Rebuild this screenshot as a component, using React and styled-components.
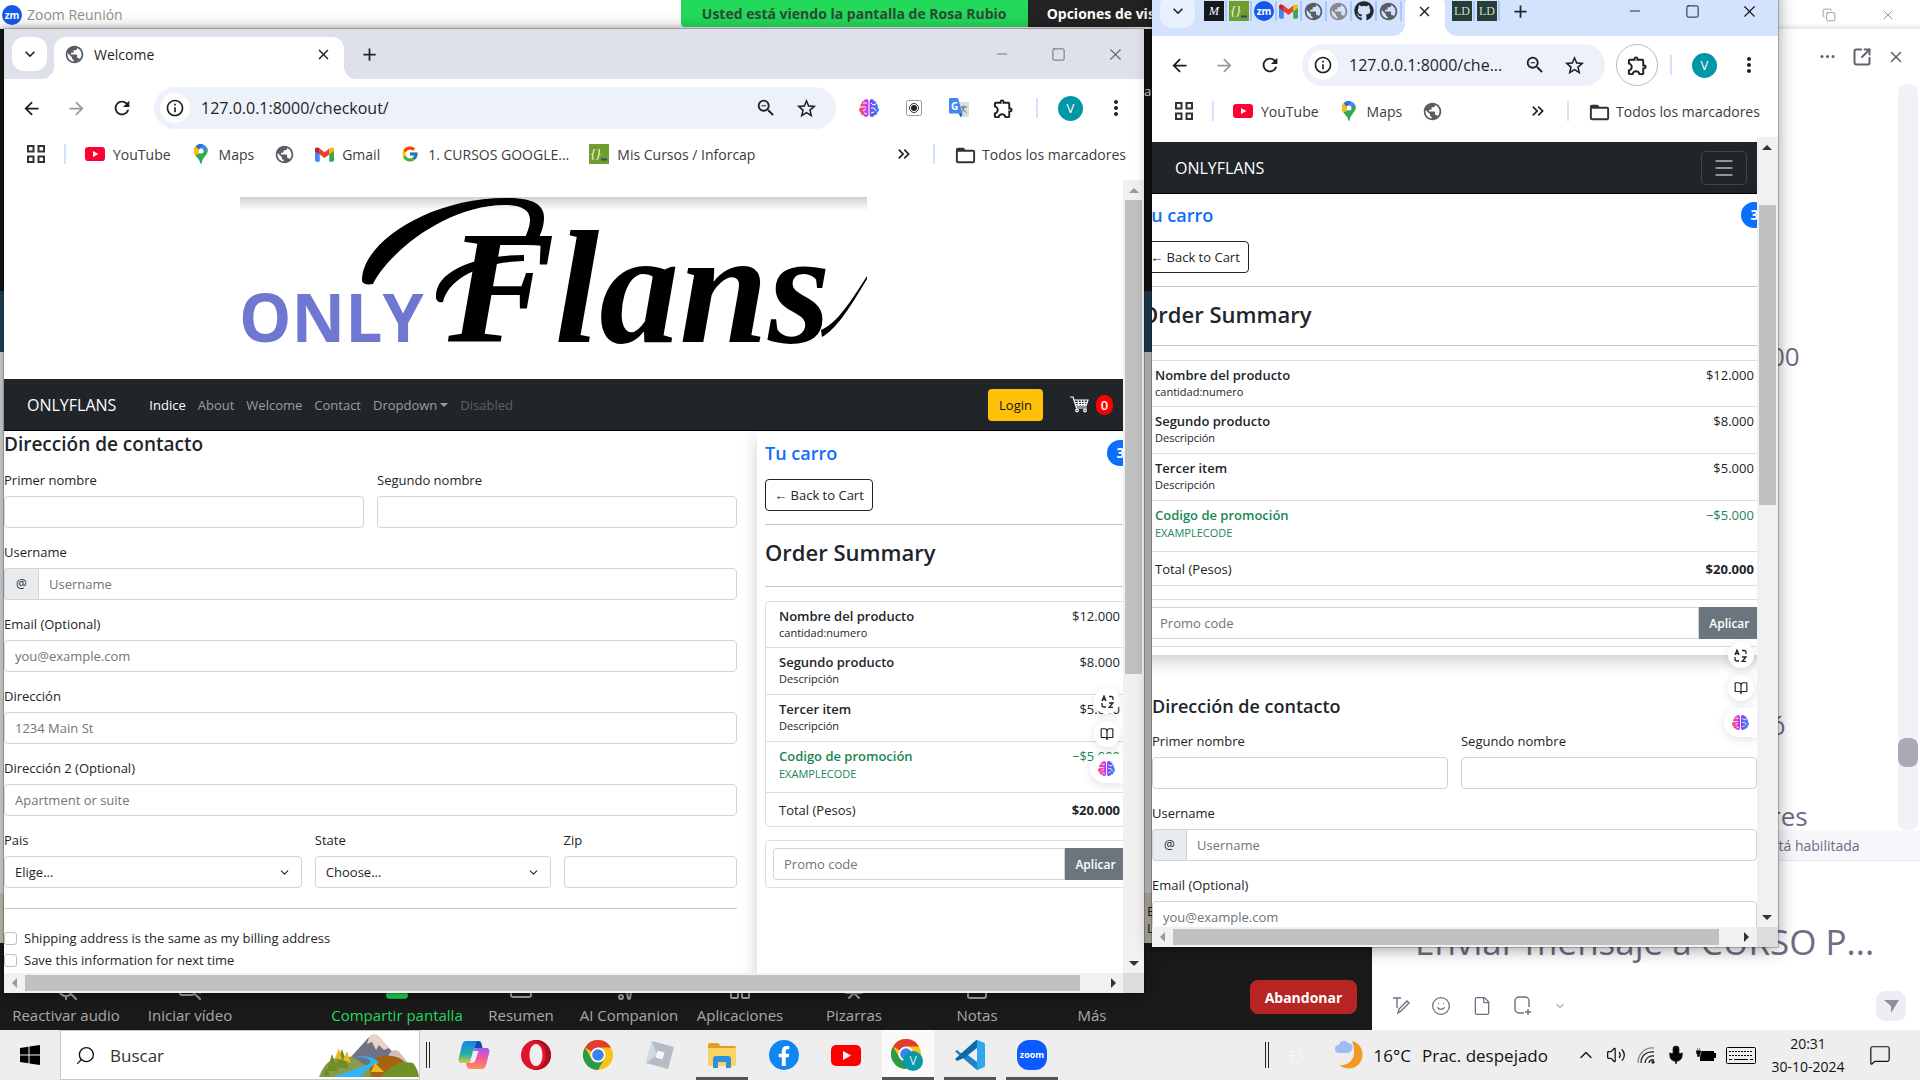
import React, { useId } from "react";
import styled, { createGlobalStyle, css } from "styled-components";
import {
  MdArrowBack, MdArrowForward, MdRefresh, MdInfoOutline, MdZoomOut, MdStarBorder,
  MdOutlineExtension, MdMoreVert, MdExpandMore, MdClose, MdAdd, MdFolderOpen,
  MdKeyboardDoubleArrowRight, MdPublic,
} from "react-icons/md";
import { FaBrain, FaGithub, FaFacebookF } from "react-icons/fa";
import { FcGoogle } from "react-icons/fc";
import {
  Minus, Square, X, Copy, SquareArrowOutUpRight, Smile, File as FileIcon, ChevronDown, ChevronUp,
  BookOpen, MicOff, VideoOff, Search, Volume2, Wifi, Mic, MessageSquare, Menu, Ellipsis,
  AppWindow, Sparkles, LayoutGrid, Presentation, StickyNote,
} from "lucide-react";

const Global = createGlobalStyle`
  *, *::before, *::after { box-sizing: border-box; }
  html, body, #root { height: 100%; }
  body { margin: 0; overflow: hidden; font-family: "Open Sans", "Noto Sans", sans-serif; color: #212529; }
  h1, h2, p, ul { margin: 0; padding: 0; }
  ul { list-style: none; }
  button, input, select { font: inherit; color: inherit; margin: 0; }
  button { padding: 0; border: 0; background: none; cursor: pointer; }
  a { color: inherit; text-decoration: none; }
  svg { display: block; flex-shrink: 0; }
`;

/* ---------- desktop ---------- */
const Desktop = styled.main`
  position: relative;
  display: flex;
  flex-direction: column;
  height: 100vh;
  overflow: hidden;
  background: #fff;
`;
const Gradients = styled.svg`
  position: absolute;
`;
const ZoomTitle = styled.header`
  display: flex;
  align-items: center;
  height: 29px;
  padding-left: 2px;
  gap: 5px;
  font-size: 14px;
  color: #8f8f8f;
  background: linear-gradient(#fff 80%, #e6e6e6);
`;
const ShareNotice = styled.p`
  display: flex;
  align-items: center;
  justify-content: center;
  align-self: flex-start;
  height: 27px;
  width: 347px;
  margin-left: 553px;
  border-radius: 0 0 0 4px;
  background: #23d959;
  color: #2c4a35;
  font-size: 14px;
  font-weight: 700;
  white-space: nowrap;
`;
const ShareOptions = styled.button`
  align-self: flex-start;
  height: 27px;
  margin-left: -5px;
  padding: 0 19px;
  background: #232323;
  color: #fff;
  font-size: 14px;
  font-weight: 700;
  white-space: nowrap;
`;
const TitleActions = styled.div`
  display: flex;
  align-items: center;
  gap: 44px;
  margin-left: auto;
  padding-right: 24px;
  color: #8c8c8c;
`;
const ZoomBody = styled.div`
  display: flex;
  flex: 1;
  min-height: 0;
`;
const Meeting = styled.section`
  display: flex;
  flex-direction: column;
  flex: 1;
  min-width: 0;
`;
const Shared = styled.div`
  position: relative;
  flex: 1;
  background: linear-gradient(#161616 0 262px, #20455c 262px 323px, #dcdcdc 323px 864px, #c9c4b8 864px);
`;
const SharedText = styled.span`
  position: absolute;
  left: ${(p) => p.$x}px;
  top: ${(p) => p.$y}px;
  font-size: 13px;
  line-height: 16px;
  color: ${(p) => p.$color};
`;
const MeetingBar = styled.nav`
  display: flex;
  height: 87px;
  background: #1a1a1a;
  color: #a9a9a9;
`;
const MeetingButton = styled.button`
  display: flex;
  flex-direction: column;
  align-items: center;
  justify-content: flex-end;
  gap: 4px;
  width: ${(p) => p.$w}px;
  margin-left: ${(p) => p.$gap || 0}px;
  padding-bottom: 5px;
  font-size: 15px;
  line-height: 20px;
  white-space: nowrap;
  color: ${(p) => (p.$on ? "#23d959" : "inherit")};
`;
const Leave = styled.button`
  align-self: flex-start;
  width: 107px;
  height: 34px;
  margin: 37px 15px 0 auto;
  border-radius: 8px;
  background: #b72525;
  color: #fff;
  font-size: 14px;
  font-weight: 700;
`;

/* ---------- chat ---------- */
const Chat = styled.aside`
  display: flex;
  flex-direction: column;
  width: 548px;
  background: #fff;
  color: #6e6c84;
`;
const ChatHead = styled.div`
  display: flex;
  align-items: center;
  justify-content: flex-end;
  gap: 15px;
  height: 55px;
  padding-right: 15px;
  color: #62606f;
`;
const ChatLog = styled.div`
  display: flex;
  flex: 1;
  min-height: 0;
`;
const Messages = styled.div`
  display: flex;
  flex-direction: column;
  justify-content: flex-end;
  flex: 1;
  padding-left: 398px;
  font-size: 26px;
  line-height: 28px;
`;
const Message = styled.p`
  margin-bottom: ${(p) => p.$after || 0}px;
`;
const ChatTrack = styled.div`
  display: flex;
  flex-direction: column;
  justify-content: flex-end;
  width: 20px;
  margin-right: 2px;
  padding-bottom: 63px;
  border-radius: 8px;
  background: #f2f1f7;
`;
const ChatThumb = styled.div`
  height: 29px;
  border-radius: 8px;
  background: #a9a8b3;
`;
const ChatNotice = styled.p`
  height: 31px;
  padding-left: 392px;
  border-bottom: 1px solid #e6e5ee;
  background: #f7f6fb;
  font-size: 14px;
  line-height: 31px;
`;
const Composer = styled.div`
  display: flex;
  flex-direction: column;
  height: 169px;
  padding: 56px 14px 9px 43px;
`;
const ComposerInput = styled.input`
  width: 100%;
  height: 48px;
  padding: 0;
  border: 0;
  outline: 0;
  font-size: 35px;
  &::placeholder { color: #6e6c84; opacity: 1; }
`;
const ComposerTools = styled.div`
  display: flex;
  align-items: center;
  gap: 21px;
  margin-top: auto;
  height: 30px;
  margin-left: -23px;
`;
const Send = styled.button`
  display: grid;
  place-items: center;
  width: 30px;
  height: 30px;
  margin-left: auto;
  border-radius: 9px;
  background: #ededf3;
`;

/* ---------- browser window ---------- */
const Window = styled.section`
  position: absolute;
  top: ${(p) => p.$top}px;
  bottom: ${(p) => p.$bottom}px;
  left: ${(p) => p.$left};
  width: ${(p) => p.$width};
  display: flex;
  flex-direction: column;
  background: #fff;
  overflow: hidden;
`;
const WindowShadow = styled(Window)`
  background: none;
  overflow: visible;
  box-shadow: 0 0 0 1px #0003, 0 2px 16px #0006;
`;
const TabStrip = styled.div`
  display: flex;
  align-items: flex-end;
  height: 50px;
  padding-left: 8px;
  background: ${(p) => (p.$active ? "#d3e3fd" : "#dee1e9")};
`;
const TabSearch = styled.button`
  display: grid;
  place-items: center;
  width: 35px;
  height: 34px;
  margin: 0 7px 8px 0;
  border-radius: 12px;
  background: ${(p) => (p.$active ? "#e9f0fd" : "#fff")};
`;
const Tab = styled.div`
  position: relative;
  display: flex;
  align-items: center;
  gap: 9px;
  width: ${(p) => (p.$compact ? 40 : 290)}px;
  height: 42px;
  margin: ${(p) => (p.$compact ? "0 5px 0 3px" : 0)};
  padding: 0 12px 8px 10px;
  border-radius: 12px 12px 0 0;
  background: #fff;
  font-size: 14px;
  color: #1f1f1f;
  &::before, &::after {
    content: "";
    position: absolute;
    bottom: 0;
    width: 12px;
    height: 12px;
  }
  &::before { left: -12px; background: radial-gradient(circle at 0 0, transparent 12px, #fff 12px); }
  &::after { right: -12px; background: radial-gradient(circle at 100% 0, transparent 12px, #fff 12px); }
`;
const TabClose = styled.button`
  margin-left: auto;
  margin-right: ${(p) => (p.$only ? "auto" : 0)};
`;
const MiniTab = styled.button`
  display: grid;
  place-items: center;
  width: 25px;
  height: 20px;
  margin-bottom: 15px;
  border-right: 2px solid #a8c7fa;
`;
const NewTab = styled.button`
  display: grid;
  place-items: center;
  width: 34px;
  height: 34px;
  margin: 0 0 8px ${(p) => p.$gap}px;
`;
const WindowControls = styled.div`
  display: flex;
  align-self: flex-end;
  height: 50px;
  margin-left: auto;
`;
const Control = styled.button`
  display: grid;
  place-items: center;
  width: 57px;
  color: ${(p) => (p.$active ? "#111" : "#666")};
`;
const ToolRow = styled.div`
  display: flex;
  align-items: center;
  height: 58px;
  padding: 0 6px 0 5px;
  color: #1f1f1f;
`;
const Tool = styled.button`
  display: grid;
  place-items: center;
  width: 45px;
  height: 42px;
  flex-shrink: 0;
  color: ${(p) => (p.$dim ? "#9a9a9a" : "inherit")};
`;
const Ring = styled.span`
  display: grid;
  place-items: center;
  width: 42px;
  height: 42px;
  border-radius: 50%;
  border: ${(p) => (p.$on ? "1px solid #bbb" : "0")};
`;
const Pill = styled.div`
  display: flex;
  align-items: center;
  flex: 1;
  min-width: 0;
  height: 42px;
  margin: 0 10px;
  padding: 0 10px 0 6px;
  border-radius: 21px;
  background: #ecf1fa;
`;
const SiteInfo = styled.button`
  display: grid;
  place-items: center;
  width: 30px;
  height: 30px;
  flex-shrink: 0;
  border-radius: 50%;
  background: #fff;
`;
const Address = styled.input`
  flex: 1;
  min-width: 0;
  margin-left: 11px;
  padding: 0;
  border: 0;
  outline: 0;
  background: none;
  font-size: 16px;
`;
const PillTool = styled.button`
  display: grid;
  place-items: center;
  width: 40px;
`;
const Divider = styled.span`
  width: 2px;
  height: 20px;
  margin: 0 ${(p) => (p.$wide ? 19 : 10)}px;
  flex-shrink: 0;
  background: #d3e3fd;
`;
const Avatar = styled.span`
  display: grid;
  place-items: center;
  width: 25px;
  height: 25px;
  border-radius: 50%;
  background: #0097a7;
  color: #fff;
  font-size: 13px;
`;
const BookmarkRow = styled.nav`
  display: flex;
  align-items: center;
  height: 43px;
  padding: 0 18px 9px 23px;
  font-size: 14px;
  color: #3c3c3c;
  white-space: nowrap;
`;
const Bookmark = styled.a`
  display: flex;
  align-items: center;
  gap: 8px;
  margin-right: 20px;
  &:last-child { margin-right: 0; }
`;
const BookmarkIcon = styled.span`
  display: grid;
  place-items: center;
  width: 20px;
  height: 20px;
`;
const Spacer = styled.span`
  flex: 1;
`;
const Viewport = styled.div`
  display: grid;
  grid-template: minmax(0, 1fr) 20px / minmax(0, 1fr) 21px;
  flex: 1;
  min-height: 0;
`;
const Page = styled.div`
  position: relative;
  overflow: hidden;
  background: #fff;
  padding-top: ${(p) => p.$top || 0}px;
`;
const Track = styled.div`
  display: flex;
  flex-direction: ${(p) => (p.$row ? "row" : "column")};
  align-items: center;
  background: #f1f1f1;
`;
const Arrow = styled.span`
  display: grid;
  place-items: center;
  width: 21px;
  height: 20px;
  flex-shrink: 0;
  color: ${(p) => (p.$dim ? "#9a9a9a" : "#333")};
`;
const Rail = styled.div`
  flex: 1;
  align-self: stretch;
  padding: ${(p) => (p.$row ? "2px 0" : "0 2px")};
`;
const Thumb = styled.div`
  background: #c1c1c1;
  ${(p) => p.$row
    ? css`width: ${p.$size}%; height: 100%;`
    : css`height: ${p.$size}%; position: relative; top: ${p.$start || 0}%;`}
`;
const Corner = styled.div`
  background: #dcdcdc;
`;

/* ---------- shop page ---------- */
const Banner = styled.div`
  display: flex;
  justify-content: center;
  padding: 17px 20px 12px 0;
`;
const Navbar = styled.nav`
  display: flex;
  align-items: center;
  height: 52px;
  padding: 0 10px 0 23px;
  background: #212529;
  border-bottom: 1px solid #000;
  font-size: 13px;
  color: #9b9d9e;
`;
const Brand = styled.a`
  margin-right: 33px;
  font-size: 16px;
  color: #fff;
`;
const NavLinks = styled.ul`
  display: flex;
  gap: 12px;
`;
const NavLink = styled.a`
  display: flex;
  align-items: center;
  gap: 3px;
  color: ${(p) => (p.$on ? "#fff" : p.$off ? "#5d6063" : "inherit")};
`;
const Caret = styled.span`
  border: 4px solid transparent;
  border-top-color: currentColor;
  border-bottom: 0;
`;
const Login = styled.button`
  width: 55px;
  height: 32px;
  margin-left: auto;
  border-radius: 4px;
  background: #ffc107;
  color: #111;
`;
const Cart = styled.a`
  display: flex;
  align-items: center;
  gap: 7px;
  margin-left: 27px;
`;
const CartCount = styled.span`
  width: 17px;
  height: 20px;
  border-radius: 9px;
  background: #f00;
  color: #fff;
  font-size: 13px;
  font-weight: 600;
  line-height: 20px;
  text-align: center;
`;
const Toggler = styled.button`
  display: grid;
  place-items: center;
  width: 46px;
  height: 34px;
  margin-left: auto;
  border: 1px solid #414549;
  border-radius: 4px;
`;
const Checkout = styled.div`
  display: ${(p) => (p.$stacked ? "block" : "grid")};
  grid-template-columns: minmax(0, 1fr) 366px;
  gap: 20px;
  min-height: 560px;
`;
const Summary = styled.aside`
  margin: ${(p) => (p.$stacked ? "0 -19px 40px" : "1px -19px 0 0")};
  padding: 8px;
  background: #fff;
  box-shadow: 0 6px 16px #0003;
`;
const SummaryHead = styled.h2`
  display: flex;
  align-items: center;
  justify-content: space-between;
  height: 26px;
  margin-bottom: 13px;
  font-size: 18px;
  font-weight: 600;
  color: #0d6efd;
`;
const Count = styled.span`
  width: 27px;
  height: 26px;
  border-radius: 13px;
  background: #0d6efd;
  color: #fff;
  font-size: 14px;
  font-weight: 700;
  line-height: 26px;
  text-align: center;
`;
const BackLink = styled.a`
  display: flex;
  align-items: center;
  justify-content: center;
  width: 108px;
  height: 32px;
  border: 1px solid #212529;
  border-radius: 4px;
  font-size: 13px;
`;
const Rule = styled.hr`
  height: 1px;
  margin: ${(p) => p.$m};
  border: 0;
  background: #c4c5c6;
`;
const SummaryTitle = styled.h1`
  height: ${(p) => (p.$stacked ? 58 : 61)}px;
  font-size: 22px;
  font-weight: 600;
  line-height: 54px;
`;
const Items = styled.ul`
  border: 1px solid #dcddde;
  border-radius: 4px;
  font-size: 13px;
`;
const Item = styled.li`
  display: flex;
  justify-content: space-between;
  align-items: ${(p) => (p.$center ? "center" : "flex-start")};
  height: ${(p) => p.$h}px;
  padding: ${(p) => (p.$center ? "0 13px" : "5px 13px 0")};
  border-bottom: 1px solid #dcddde;
  line-height: 18px;
  color: ${(p) => (p.$green ? "#198754" : "inherit")};
  &:last-child { border-bottom: 0; }
`;
const ItemName = styled.p`
  font-size: 13px;
  font-weight: 600;
`;
const ItemNote = styled.p`
  font-size: 11px;
  line-height: ${(p) => (p.$tall ? 18 : 15)}px;
`;
const Promo = styled.form`
  display: flex;
  margin-top: 13px;
  padding: 7px;
  border: 1px solid #dcddde;
  border-radius: 4px;
`;
const Field = styled.input`
  width: 100%;
  min-width: 0;
  height: 32px;
  padding: 0 10px;
  border: 1px solid #ced4da;
  border-radius: ${(p) => p.$radius || "4px"};
  background: #fff;
  font-size: 13px;
  outline: 0;
  &::placeholder { color: #6c757d; opacity: 1; }
`;
const Apply = styled.button`
  width: 61px;
  flex-shrink: 0;
  background: #6c757d;
  color: #fff;
  font-size: 12px;
  font-weight: 600;
`;
const Form = styled.form`
  font-size: 13px;
`;
const FormTitle = styled.h2`
  height: ${(p) => (p.$small ? 26 : 29)}px;
  margin-bottom: 12px;
  font-size: ${(p) => (p.$small ? 18 : 19)}px;
  font-weight: 600;
  line-height: ${(p) => (p.$small ? 22 : 27)}px;
`;
const Fields = styled.div`
  display: grid;
  grid-template-columns: repeat(12, minmax(0, 1fr));
  column-gap: 13px;
`;
const Group = styled.div`
  grid-column: span ${(p) => p.$span};
  height: 72px;
`;
const Label = styled.label`
  display: block;
  height: 24px;
  line-height: 16px;
`;
const Joined = styled.div`
  position: relative;
  display: flex;
`;
const At = styled.span`
  width: 34px;
  flex-shrink: 0;
  height: 32px;
  border: 1px solid #ced4da;
  border-right: 0;
  border-radius: 4px 0 0 4px;
  background: #e9ecef;
  font-size: 12px;
  line-height: 30px;
  text-align: center;
`;
const SelectBox = styled.select`
  width: 100%;
  height: 32px;
  padding: 0 10px;
  border: 1px solid #ced4da;
  border-radius: 4px;
  background: #fff;
  appearance: none;
`;
const SelectArrow = styled(ChevronDown)`
  position: absolute;
  right: 11px;
  top: 10px;
  pointer-events: none;
`;
const Check = styled.label`
  display: flex;
  align-items: center;
  gap: 7px;
  height: 22px;
`;
const Box = styled.input`
  width: 13px;
  height: 13px;
  border: 1px solid #bfbfbf;
  border-radius: 3px;
  appearance: none;
`;
const Helpers = styled.div`
  position: absolute;
  right: 0;
  bottom: 190px;
  display: flex;
  flex-direction: column;
  align-items: flex-end;
  gap: 7px;
`;
const Helper = styled.button`
  display: grid;
  place-items: center;
  width: ${(p) => (p.$wide ? 33 : 26)}px;
  height: ${(p) => (p.$wide ? 29 : 26)}px;
  margin-right: ${(p) => (p.$wide ? 0 : 3)}px;
  border-radius: ${(p) => (p.$wide ? "15px 0 0 15px" : "13px")};
  background: #fff;
  box-shadow: 0 2px 10px #0000001f;
`;

/* ---------- taskbar ---------- */
const Taskbar = styled.footer`
  display: flex;
  align-items: center;
  height: 50px;
  background: #eee;
  color: #111;
`;
const Start = styled.button`
  display: grid;
  place-items: center;
  width: 60px;
  height: 50px;
`;
const SearchBox = styled.label`
  display: flex;
  align-items: center;
  gap: 14px;
  width: 360px;
  height: 50px;
  padding-left: 14px;
  border: 1px solid #c8c8c8;
  background: #fff;
`;
const SearchGlyph = styled(Search)`
  transform: scaleX(-1);
`;
const SearchInput = styled.input`
  flex: 1;
  min-width: 0;
  padding: 0;
  border: 0;
  outline: 0;
  background: none;
  font-size: 17px;
  &::placeholder { color: #333; opacity: 1; }
`;
const Grip = styled.span`
  width: 4px;
  height: 26px;
  margin: 0 ${(p) => p.$after}px 0 6px;
  border: solid #222;
  border-width: 0 1px;
`;
const AppButton = styled.button`
  position: relative;
  display: grid;
  place-items: center;
  width: 62px;
  height: 50px;
  border: solid transparent;
  border-width: 0 5px;
  background: ${(p) => (p.$active ? "#fafafa" : "none")} padding-box;
  &::after {
    content: "";
    position: absolute;
    inset: auto 0 0;
    height: ${(p) => (p.$open ? 3 : 0)}px;
    background: #555;
  }
`;
const Weather = styled.button`
  display: flex;
  align-items: center;
  gap: 11px;
  margin-right: 23px;
  font-size: 17px;
  white-space: nowrap;
`;
const Lang = styled.span`
  width: 20px;
  margin-right: 26px;
  color: #f8f8f8;
  font-size: 14px;
`;
const TrayIcon = styled.button`
  display: grid;
  place-items: center;
  width: ${(p) => p.$w || 30}px;
  height: 50px;
`;
const Clock = styled.time`
  width: 94px;
  font-size: 14px;
  line-height: 23px;
  text-align: center;
`;
const Notify = styled.button`
  display: grid;
  place-items: center;
  width: 50px;
  height: 50px;
  margin-right: 15px;
`;

/* ---------- drawings ---------- */
const ZoomBadge = ({ size = 20 }) => (
  <svg width={size} height={size} viewBox="0 0 20 20"><circle cx="10" cy="10" r="10" fill="#1458ea" />
    <text x="10" y="13.5" textAnchor="middle" fontSize="10" fontWeight="700" fill="#fff">zm</text></svg>
);
const YouTube = ({ w = 20, color = "#ff0033" }) => (
  <svg width={w} height={w * 0.7} viewBox="0 0 30 21"><rect width="30" height="21" rx="5" fill={color} /><path d="M12 6l8 4.5-8 4.5z" fill="#fff" /></svg>
);
const MapsPin = () => (
  <svg width="14" height="20" viewBox="0 0 14 20">
    <path d="M0 7a7 7 0 0 0 1.5 4.6L9.5 2 7 0A7 7 0 0 0 0 7z" fill="#ea4335" />
    <path d="M1.6 2.6A7 7 0 0 1 9.3.4L4.8 5.6z" fill="#1a73e8" />
    <path d="M9.3.4A7 7 0 0 1 13.4 4.2L9 9.2 4.8 5.6z" fill="#4285f4" />
    <path d="M1.5 11.6A7 7 0 0 1 1.6 2.6l3.2 3A3 3 0 0 0 5 9z" fill="#fbbc04" />
    <path d="M13.4 4.2C15.6 10.500 8.500 12 7.700 19.300Q7 20.600 6.300 19.300C5.800 15.800 3 14 1.500 11.600z" fill="#34a853" />
    <circle cx="7" cy="7" r="2.500" fill="#fff" />
  </svg>
);
const Gmail = () => (
  <svg width="19" height="15" viewBox="0 0 24 18">
    <path d="M0 2v14a2 2 0 0 0 2 2h4V7z" fill="#4285f4" /><path d="M24 2v14a2 2 0 0 1-2 2h-4V7z" fill="#34a853" />
    <path d="M18 1v8l6-4.500V2.500C24 0 21 -.5 19.500.7z" fill="#fbbc04" /><path d="M6 1v8L0 4.500V2.500C0 0 3-.5 4.500.7z" fill="#c5221f" />
    <path d="M6 1.500l6 4.700 6-4.700V9l-6 4.500L6 9z" fill="#ea4335" />
  </svg>
);
const Tile = ({ bg, fg = "#fff", upright, children }) => (
  <svg width="20" height="20" viewBox="0 0 20 20"><rect width="20" height="20" fill={bg} />
    <text x="10" y="14" textAnchor="middle" fontSize="12" fontFamily="Liberation Serif, serif" fontStyle={upright ? "normal" : "italic"} fill={fg}>{children}</text></svg>
);
const Inforcap = () => (
  <svg width="20" height="20" viewBox="0 0 20 20"><rect width="20" height="20" fill="#6f9e2c" />
    <text x="2" y="14" fontSize="12" fontFamily="Liberation Serif, serif" fontStyle="italic" fill="#fff">{"{}"}</text><path d="M12 15.500h6" stroke="#1f4f7a" strokeWidth="2" /></svg>
);
const Globe = () => <MdPublic size={21} color="#5a5e64" />;
const AppsGrid = () => (
  <svg width="18" height="18" viewBox="0 0 18 18" fill="none" stroke="#333" strokeWidth="2"><path d="M1 1h5.500v5.500H1zM11.500 1H17v5.500h-5.500zM1 11.500h5.500V17H1zM11.500 11.500H17V17h-5.500z" /></svg>
);
const Brain = ({ size = 20 }) => (
  <svg width={size} height={size} viewBox="0 0 20 20">
    <FaBrain size={20} fill="url(#brain)" />
    <path d="M1 9h6M4 5h4M4 13l3-2M8 16l-3-1M12 5l2 2 3-1M12 10h3l2 3M12 15l3-1" stroke="#fff" strokeWidth="1" fill="none" />
  </svg>
);
const Recorder = () => (
  <svg width="16" height="16" viewBox="0 0 16 16"><rect x=".5" y=".5" width="15" height="15" rx="2" fill="#fff" stroke="#999" /><circle cx="8" cy="8" r="4.500" fill="none" stroke="#333" /><circle cx="8" cy="8" r="3" fill="#222" /></svg>
);
const Translate = () => (
  <svg width="20" height="20" viewBox="0 0 20 20"><path d="M8 4h11a1 1 0 0 1 1 1v13a1 1 0 0 1-1 1h-6z" fill="#dcdcdc" /><path d="M1 0h8l4.500 15.500H1a1 1 0 0 1-1-1V1a1 1 0 0 1 1-1z" fill="#4285f4" /><path d="M9.500 15.500h4L12 19.500z" fill="#1a4fb5" />
    <text x="2" y="12" fontSize="10" fontWeight="700" fill="#fff">G</text><path d="M12 9h6M15 7.500V9c0 3-1.500 4.500-3 5.500M13 9c.5 2.500 2 4 4.500 5.500" stroke="#5f7180" fill="none" /></svg>
);
const CartIcon = () => (
  <svg width="19" height="17" viewBox="0 0 19 17" fill="none" stroke="#fff" strokeWidth="1.200"><path d="M0 1h3l3.500 11H17M4 4h14l-2 6H6M8 4l1 6M11 4l1 6M14 4l.5 6M5 6.500h12M6 8.500h11" /><circle cx="7" cy="14.500" r="1.300" /><circle cx="15" cy="14.500" r="1.300" /></svg>
);
const TranslateMini = () => (
  <svg width="13" height="13" viewBox="0 0 13 13" fill="none" stroke="#222" strokeWidth="1.300"><path d="M1 6l2-5 2 5M2 4.500h2M8 1.500h2a2 2 0 0 1 2 2V5M1 8v2a2 2 0 0 0 2 2h2M8 8h4l-4 4.500h4" /></svg>
);
const Logo = () => (
  <svg width="627" height="170" viewBox="0 0 627 170" role="img" aria-label="OnlyFlans">
    <defs><linearGradient id="haze" x1="0" y1="0" x2="0" y2="1"><stop stopColor="#d2d2d2" /><stop offset="1" stopColor="#fff" /></linearGradient></defs>
    <rect width="627" height="14" fill="url(#haze)" />
    <text x="-1" y="145" fontFamily="Open Sans, sans-serif" fontWeight="700" fontSize="66" fill="#7077d0">ONLY</text>
    <text x="208" y="145" fontFamily="Liberation Serif, serif" fontStyle="italic" fontWeight="700" fontSize="160">Flans</text>
    <path d="M122 84C121 46 190 0 268 1c24 0 36 6 36 20 0 8-3 16-8 26h-14c5-10 8-18 8-24 0-10-8-14-22-15C208 6 148 56 133 87c-6 1-10 0-11-3z" />
    <path d="M196 100c-1-26 40-42 88-42v6c-44 1-76 18-81 41-4 1-7-1-7-5z" />
    <path d="M582 140c14-8 26-26 45-58v-3c-20 32-32 48-46 54z" />
  </svg>
);
const Chrome = ({ badge }) => (
  <svg width={badge ? 34 : 30} height={badge ? 32 : 30} viewBox={badge ? "0 0 34 32" : "0 0 30 30"}>
    <circle cx="15" cy="15" r="15" fill="#fbc116" />
    <path d="M15 15L2 7.500A15 15 0 0 1 28 7.500H15z" fill="#e33b2e" />
    <path d="M2 7.500A15 15 0 0 0 15 30l6.500-11.300L8.500 18.700z" fill="#2c9a48" />
    <circle cx="15" cy="15" r="7.500" fill="#fff" /><circle cx="15" cy="15" r="5.800" fill="#3c82f0" />
    {badge && <><circle cx="22" cy="22" r="10" fill="#0b97a7" /><text x="22" y="26" fontSize="12" textAnchor="middle" fill="#d9f1f4">V</text></>}
  </svg>
);
const Copilot = () => (
  <svg width="32" height="30" viewBox="0 0 32 30">
    <defs>
      <linearGradient id="cpA" x1="0" y1="0" x2="0" y2="1"><stop stopColor="#1583e8" /><stop offset=".6" stopColor="#21b0a5" /><stop offset="1" stopColor="#d9c93a" /></linearGradient>
      <linearGradient id="cpB" x1="0" y1="0" x2="0" y2="1"><stop stopColor="#a259f2" /><stop offset=".5" stopColor="#f2589a" /><stop offset="1" stopColor="#fb9352" /></linearGradient>
    </defs>
    <path d="M8 1h12c2 0 3 1 3.500 3l1 4h-6c-2 0-3 1-3.500 3l-2.500 9c-.6 2-2 3-4 3H4c-3 0-4-2-3.200-5L4 5c.7-2.500 2-4 4-4z" fill="url(#cpA)" />
    <path d="M19 1h1c2 0 3 1 3.500 3l1 4h-6c-1.500 0-2 .5-2.600 1.200z" fill="#1647b0" />
    <path d="M24 8h4c3 0 4 2 3.200 5L28 25c-.7 2.500-2 4-4 4H12c-2 0-3-1-3.400-3L8 23h1c2 0 3-1 3.500-3l3-9c.6-2 2-3 4-3z" fill="url(#cpB)" />
    <path d="M15.500 11h5l-3 9c-.5 2-2 3-4 3h-2c.6-.6.800-1.500 1-3z" fill="#eee" />
  </svg>
);
const Opera = () => (
  <svg width="30" height="30" viewBox="0 0 30 30"><path fillRule="evenodd" d="M15 0a15 15 0 1 0 0 30 15 15 0 0 0 0-30zm0 4c4 0 6.500 5 6.500 11S19 26 15 26 8.500 21 8.500 15 11 4 15 4z" fill="#e0142a" /><path d="M15 0a15 15 0 0 1 0 30c-2 0-3.500-1-5-2 8 3 15-4 15-13S18-1 10 2q2-2 5-2z" fill="#a90f1f" /></svg>
);
const Roblox = () => (
  <svg width="30" height="30" viewBox="0 0 30 30"><path d="M7 1l22 6-6 22L1 23z" fill="#b4bdc6" /><path d="M7 1L1 23l11-8z" fill="#d3d9de" /><path d="M12.500 10.500l7 2-2 7-7-2z" fill="#f4f6f8" /></svg>
);
const Explorer = () => (
  <svg width="28" height="25" viewBox="0 0 28 25"><path d="M0 2q0-2 2-2h8l3 3h13q2 0 2 2v4H0z" fill="#e0a020" /><rect y="5" width="28" height="18" rx="1" fill="#fbd265" /><path d="M5 25v-9q0-3 3-3h12q3 0 3 3v9h-5v-6h-8v6z" fill="#3191dd" /></svg>
);
const VsCode = () => (
  <svg width="30" height="30" viewBox="0 0 30 30"><path d="M22 0L7 14l-5-4-2 1.500L22 30l7-3V3z" fill="#1d82c8" /><path d="M22 8L10 17.500 2 21 0 19 20 1l2-1z" fill="#0d69ac" /><path d="M22 0l8 3.500v23L22 30z" fill="#2fa7ee" /><path d="M22 8v14l-9-7z" fill="#eee" /></svg>
);
const ZoomApp = () => (
  <svg width="30" height="30" viewBox="0 0 30 30"><rect width="30" height="30" rx="12" fill="#0b5cff" /><text x="15" y="18" fontSize="9" fontWeight="700" textAnchor="middle" fill="#fff">zoom</text></svg>
);
const FacebookApp = () => (
  <svg width="30" height="30" viewBox="0 0 30 30"><circle cx="15" cy="15" r="15" fill="#0f86f2" /><FaFacebookF x="5" y="6" size={20} color="#fff" /></svg>
);
const WindowsLogo = () => (
  <svg width="20" height="20" viewBox="0 0 20 20"><path d="M0 3l8.500-1.200v7.700H0zM9.500 1.600L20 0v9.500H9.500zM0 10.500h8.500v7.700L0 17zM9.500 10.500H20V20L9.500 18.400z" fill="#000" /></svg>
);
const Mountain = () => (
  <svg width="100" height="43" viewBox="0 0 100 43">
    <path d="M31 24L50 3q5-5 10 0l18 20 8 8H28z" fill="#6d7286" />
    <path d="M50 3q5-5 10 0l10 11-5 2-5-5-3 5-4-8-5 2z" fill="#ecd2c8" />
    <path d="M70 20q6-8 12 0l8 10H68z" fill="#d6bdb7" />
    <path d="M0 43q8-24 34-20l30 20z" fill="#8a9a4a" />
    <path d="M50 27q25-12 38 3 10 8 12 13H52z" fill="#a5650f" />
    <path d="M62 43q14-18 32-14 5 6 6 14z" fill="#6f9124" />
    <path d="M34 22q22 2 16 8-22 8-36 13h28q6-10 18-14-4-8-26-7z" fill="#2fb6f5" />
    <path d="M8 37l5-17 6 17zM16 33l7-18 7 20zM4 42l3-9 4 9z" fill="#6d8f25" />
    <path d="M16 24l4-10 3 12zM24 26l4-9 4 12zM52 38l4-9 9 9z" fill="#f3b61f" />
  </svg>
);
const Moon = () => (
  <svg width="28" height="34" viewBox="0 0 28 34"><path d="M17 3c9 2 13 12 9 20-4 8-14 10-22 4 8 1 14-4 15-11 .5-5-.5-9-2-13z" fill="#f39a24" /><path d="M4 15a4 4 0 0 1 0-8 5 5 0 0 1 9-2 4.500 4.500 0 0 1 3 8q-1 2-3 2z" fill="#9fbdf0" /></svg>
);
const WifiArcs = () => (
  <svg width="18" height="20" viewBox="0 0 18 20" fill="none" stroke="#222" strokeWidth="1.300">
    <path d="M1 18C1 9 8 2 17 3" opacity=".5" /><path d="M4 18C4 11 9 6 17 7M8 18c0-4 4-8 9-7M12 18c0-2 2-4 5-3" /><circle cx="16" cy="17" r="1" fill="#222" />
  </svg>
);

const ArrowMark = ({ d, dim }) => (
  <Arrow $dim={dim}><svg width="10" height="10" viewBox="0 0 10 10" fill="currentColor">
    <path d={{ up: "M0 8h10L5 3z", down: "M0 3h10L5 8z", left: "M7 0v10L2 5z", right: "M3 0v10l5-5z" }[d]} />
  </svg></Arrow>
);

/* ---------- shop sections ---------- */
const products = [
  { name: "Nombre del producto", note: "cantidad:numero", price: "$12.000", h: 46 },
  { name: "Segundo producto", note: "Descripción", price: "$8.000", h: 47 },
  { name: "Tercer item", note: "Descripción", price: "$5.000", h: 47 },
];

function OrderSummary({ stacked }) {
  return (
    <Summary $stacked={stacked}>
      <SummaryHead>Tu carro <Count>3</Count></SummaryHead>
      <BackLink href="#cart">← Back to Cart</BackLink>
      <Rule $m="13px 0 0" />
      <SummaryTitle $stacked={stacked}>Order Summary</SummaryTitle>
      <Rule $m="0 0 14px" />
      <Items>
        {products.map((p) => (
          <Item key={p.name} $h={p.h}>
            <div><ItemName>{p.name}</ItemName><ItemNote>{p.note}</ItemNote></div>{p.price}
          </Item>
        ))}
        <Item $h={51} $green>
          <div><ItemName>Codigo de promoción</ItemName><ItemNote $tall>EXAMPLECODE</ItemNote></div>−$5.000
        </Item>
        <Item $h={33} $center><span>Total (Pesos)</span><strong>$20.000</strong></Item>
      </Items>
      <Promo onSubmit={(e) => e.preventDefault()}>
        <Field aria-label="Promo code" placeholder="Promo code" $radius="4px 0 0 4px" />
        <Apply type="submit">Aplicar</Apply>
      </Promo>
    </Summary>
  );
}

function TextGroup({ label, placeholder, span = 12, at }) {
  const id = useId();
  return (
    <Group $span={span}>
      <Label htmlFor={id}>{label}</Label>
      <Joined>
        {at && <At>@</At>}
        <Field id={id} placeholder={placeholder} $radius={at ? "0 4px 4px 0" : undefined} />
      </Joined>
    </Group>
  );
}
function SelectGroup({ label, option, span }) {
  const id = useId();
  return (
    <Group $span={span}>
      <Label htmlFor={id}>{label}</Label>
      <Joined>
        <SelectBox id={id}><option>{option}</option></SelectBox>
        <SelectArrow size={13} />
      </Joined>
    </Group>
  );
}
function ContactForm({ small }) {
  return (
    <Form onSubmit={(e) => e.preventDefault()}>
      <FormTitle $small={small}>Dirección de contacto</FormTitle>
      <Fields>
        <TextGroup span={6} label="Primer nombre" />
        <TextGroup span={6} label="Segundo nombre" />
        <TextGroup label="Username" placeholder="Username" at />
        <TextGroup label="Email (Optional)" placeholder="you@example.com" />
        <TextGroup label="Dirección" placeholder="1234 Main St" />
        <TextGroup label="Dirección 2 (Optional)" placeholder="Apartment or suite" />
        <SelectGroup span={5} label="Pais" option="Elige..." />
        <SelectGroup span={4} label="State" option="Choose..." />
        <TextGroup span={3} label="Zip" />
      </Fields>
      <Rule $m="4px 0 18px" />
      <Check><Box type="checkbox" />Shipping address is the same as my billing address</Check>
      <Check><Box type="checkbox" />Save this information for next time</Check>
    </Form>
  );
}
const PageHelpers = () => (
  <Helpers>
    <Helper aria-label="Traducir"><TranslateMini /></Helper>
    <Helper aria-label="Leer"><BookOpen size={14} color="#222" /></Helper>
    <Helper $wide aria-label="Asistente"><Brain size={17} /></Helper>
  </Helpers>
);

/* ---------- browser ---------- */
function Browser({ active, frame, tabs, url, extensions, bookmarks, pageTop, vThumb, hThumb, upDim, children }) {
  return (
    <>
      <WindowShadow {...frame} as="div" />
      <Window {...frame}>
        <TabStrip $active={active}>
          <TabSearch $active={active} aria-label="Buscar pestañas"><MdExpandMore size={20} /></TabSearch>
          {tabs}
          <WindowControls>
            <Control $active={active} aria-label="Minimizar"><Minus size={16} strokeWidth={1.3} /></Control>
            <Control $active={active} aria-label="Maximizar"><Square size={15} strokeWidth={1.5} /></Control>
            <Control $active={active} aria-label="Cerrar"><X size={19} strokeWidth={1.4} /></Control>
          </WindowControls>
        </TabStrip>
        <ToolRow>
          <Tool aria-label="Atrás"><MdArrowBack size={21} /></Tool>
          <Tool $dim aria-label="Adelante"><MdArrowForward size={21} /></Tool>
          <Tool aria-label="Recargar"><MdRefresh size={22} /></Tool>
          <Pill>
            <SiteInfo aria-label="Información"><MdInfoOutline size={20} /></SiteInfo>
            <Address aria-label="Dirección web" defaultValue={url} />
            <PillTool aria-label="Zoom"><MdZoomOut size={22} /></PillTool>
            <PillTool aria-label="Favorito"><MdStarBorder size={23} /></PillTool>
          </Pill>
          {extensions}
          <Tool aria-label="Extensiones"><Ring $on={active}><MdOutlineExtension size={23} /></Ring></Tool>
          <Divider />
          <Tool aria-label="Perfil"><Avatar>V</Avatar></Tool>
          <Tool aria-label="Menú"><MdMoreVert size={24} /></Tool>
        </ToolRow>
        <BookmarkRow>
          <AppsGrid />
          <Divider $wide />
          {bookmarks}
          <Spacer />
          <MdKeyboardDoubleArrowRight size={20} color="#222" />
          <Divider $wide />
          <Bookmark href="#all"><BookmarkIcon><MdFolderOpen size={23} color="#333" /></BookmarkIcon>Todos los marcadores</Bookmark>
        </BookmarkRow>
        <Viewport>
          <Page $top={pageTop}>{children}<PageHelpers /></Page>
          <Track>
            <ArrowMark d="up" dim={upDim} /><Rail><Thumb $size={vThumb[1]} $start={vThumb[0]} /></Rail><ArrowMark d="down" />
          </Track>
          <Track $row>
            <ArrowMark d="left" dim /><Rail $row><Thumb $row $size={hThumb} /></Rail><ArrowMark d="right" />
          </Track>
          <Corner />
        </Viewport>
      </Window>
    </>
  );
}
const Mark = ({ icon, children }) => (
  <Bookmark href="#site"><BookmarkIcon>{icon}</BookmarkIcon>{children}</Bookmark>
);

export default function App() {
  return (
    <>
      <Global />
      <Gradients width="0" height="0">
        <defs><linearGradient id="brain"><stop stopColor="#ff5a3c" /><stop offset=".3" stopColor="#e03be0" /><stop offset=".6" stopColor="#7a4bf5" /><stop offset="1" stopColor="#2f8bff" /></linearGradient></defs>
      </Gradients>
      <Desktop>
        <ZoomTitle>
          <ZoomBadge /> Zoom Reunión
          <ShareNotice>Usted está viendo la pantalla de Rosa Rubio</ShareNotice>
          <ShareOptions>Opciones de vista</ShareOptions>
          <TitleActions><Copy size={14} strokeWidth={1.4} /><X size={16} strokeWidth={1.4} /></TitleActions>
        </ZoomTitle>
        <ZoomBody>
          <Meeting>
            <Shared>
              <SharedText $x={1144} $y={54} $color="#fff">a</SharedText>
              <SharedText $x={1147} $y={874} $color="#222">E</SharedText>
              <SharedText $x={1147} $y={891} $color="#222">L</SharedText>
            </Shared>
            <MeetingBar>
              <MeetingButton $w={132}><MicOff size={24} />Reactivar audio</MeetingButton>
              <MeetingButton $w={116}><VideoOff size={24} />Iniciar vídeo</MeetingButton>
              <MeetingButton $w={142} $gap={78} $on><Square size={26} fill="#23d959" />Compartir pantalla</MeetingButton>
              <MeetingButton $w={106}><AppWindow size={24} />Resumen</MeetingButton>
              <MeetingButton $w={110}><Sparkles size={24} />AI Companion</MeetingButton>
              <MeetingButton $w={112}><LayoutGrid size={24} />Aplicaciones</MeetingButton>
              <MeetingButton $w={116}><Presentation size={24} />Pizarras</MeetingButton>
              <MeetingButton $w={130}><StickyNote size={24} />Notas</MeetingButton>
              <MeetingButton $w={100}>Más</MeetingButton>
              <Leave>Abandonar</Leave>
            </MeetingBar>
          </Meeting>
          <Chat>
            <ChatHead><Ellipsis size={19} /><SquareArrowOutUpRight size={20} strokeWidth={2.4} /><X size={18} /></ChatHead>
            <ChatLog>
              <Messages><Message $after={341}>00</Message><Message $after={63}>ó</Message><Message>res</Message></Messages>
              <ChatTrack><ChatThumb /></ChatTrack>
            </ChatLog>
            <ChatNotice>está habilitada</ChatNotice>
            <Composer>
              <ComposerInput aria-label="Mensaje" placeholder="Enviar mensaje a CURSO P..." />
              <ComposerTools>
                <svg width="18" height="20" viewBox="0 0 18 20" fill="none" stroke="currentColor" strokeWidth="1.400"><path d="M1 2h8M5 2v10M6 17l1-4 8-8 2 2-8 8z" /></svg>
                <Smile size={20} strokeWidth={1.5} /><FileIcon size={20} strokeWidth={1.5} />
                <svg width="20" height="20" viewBox="0 0 20 20" fill="none" stroke="currentColor" strokeWidth="1.400"><path d="M11 17H6a4 4 0 0 1-4-4V5a4 4 0 0 1 4-4h6a4 4 0 0 1 4 4v6M15 13v6M12 16h6" /></svg>
                <ChevronDown size={12} />
                <Send aria-label="Enviar"><svg width="15" height="15" viewBox="0 0 15 15" fill="#8f8e9c"><path d="M0 1h15L7 14V7z" /></svg></Send>
              </ComposerTools>
            </Composer>
          </Chat>
        </ZoomBody>

        <Browser
          frame={{ $top: 29, $bottom: 87, $left: "4px", $width: "59.375%" }}
          tabs={<>
            <Tab><Globe />Welcome<TabClose aria-label="Cerrar pestaña"><MdClose size={17} /></TabClose></Tab>
            <NewTab $gap={8} aria-label="Nueva pestaña"><MdAdd size={21} /></NewTab>
          </>}
          url="127.0.0.1:8000/checkout/"
          extensions={<>
            <Tool aria-label="Asistente"><Brain /></Tool>
            <Tool aria-label="Grabadora"><Recorder /></Tool>
            <Tool aria-label="Traductor"><Translate /></Tool>
          </>}
          bookmarks={<>
            <Mark icon={<YouTube />}>YouTube</Mark>
            <Mark icon={<MapsPin />}>Maps</Mark>
            <Bookmark href="#local" aria-label="Local"><BookmarkIcon><Globe /></BookmarkIcon></Bookmark>
            <Mark icon={<Gmail />}>Gmail</Mark>
            <Mark icon={<FcGoogle size={18} />}>1. CURSOS GOOGLE...</Mark>
            <Mark icon={<Inforcap />}>Mis Cursos / Inforcap</Mark>
          </>}
          vThumb={[0, 63]} hThumb={98} upDim
        >
          <Banner><Logo /></Banner>
          <Navbar>
            <Brand href="#home">ONLYFLANS</Brand>
            <NavLinks>
              <li><NavLink href="#i" $on>Indice</NavLink></li>
              <li><NavLink href="#a">About</NavLink></li>
              <li><NavLink href="#w">Welcome</NavLink></li>
              <li><NavLink href="#c">Contact</NavLink></li>
              <li><NavLink href="#d">Dropdown<Caret /></NavLink></li>
              <li><NavLink $off>Disabled</NavLink></li>
            </NavLinks>
            <Login>Login</Login>
            <Cart href="#cart"><CartIcon /><CartCount>0</CartCount></Cart>
          </Navbar>
          <Checkout><ContactForm /><OrderSummary /></Checkout>
        </Browser>

        <Browser
          active
          frame={{ $top: -14, $bottom: 133, $left: "60%", $width: "32.6%" }}
          tabs={<>
            <MiniTab><Tile bg="#15181d">M</Tile></MiniTab>
            <MiniTab><Inforcap /></MiniTab>
            <MiniTab><ZoomBadge /></MiniTab>
            <MiniTab><Gmail /></MiniTab>
            <MiniTab><Globe /></MiniTab>
            <MiniTab><MdPublic size={21} color="#8a8a8a" /></MiniTab>
            <MiniTab><FaGithub size={20} color="#24292f" /></MiniTab>
            <MiniTab><Globe /></MiniTab>
            <Tab $compact><TabClose $only aria-label="Cerrar pestaña"><MdClose size={17} /></TabClose></Tab>
            <MiniTab><Tile bg="#263e35" fg="#cfd8d4" upright>LD</Tile></MiniTab>
            <MiniTab><Tile bg="#263e35" fg="#cfd8d4" upright>LD</Tile></MiniTab>
            <NewTab $gap={3} aria-label="Nueva pestaña"><MdAdd size={21} /></NewTab>
          </>}
          url="127.0.0.1:8000/che..."
          bookmarks={<>
            <Mark icon={<YouTube />}>YouTube</Mark>
            <Mark icon={<MapsPin />}>Maps</Mark>
            <Bookmark href="#local" aria-label="Local"><BookmarkIcon><Globe /></BookmarkIcon></Bookmark>
          </>}
          pageTop={5} vThumb={[6.4, 40]} hThumb={97}
        >
          <Navbar>
            <Brand href="#home">ONLYFLANS</Brand>
            <Toggler aria-label="Menú"><Menu size={24} strokeWidth={1.3} color="#b9bbbd" /></Toggler>
          </Navbar>
          <Checkout $stacked><OrderSummary stacked /><ContactForm small /></Checkout>
        </Browser>

        <Taskbar>
          <Start aria-label="Inicio"><WindowsLogo /></Start>
          <SearchBox>
            <SearchGlyph size={21} strokeWidth={1.5} />
            <SearchInput aria-label="Buscar" placeholder="Buscar" />
            <Mountain />
          </SearchBox>
          <Grip $after={13} />
          <AppButton aria-label="Copilot"><Copilot /></AppButton>
          <AppButton aria-label="Opera"><Opera /></AppButton>
          <AppButton aria-label="Chrome"><Chrome /></AppButton>
          <AppButton aria-label="Roblox"><Roblox /></AppButton>
          <AppButton aria-label="Explorador" $open><Explorer /></AppButton>
          <AppButton aria-label="Facebook"><FacebookApp /></AppButton>
          <AppButton aria-label="YouTube"><YouTube w={30} color="#ff0000" /></AppButton>
          <AppButton aria-label="Chrome V" $open $active><Chrome badge /></AppButton>
          <AppButton aria-label="Code" $open><VsCode /></AppButton>
          <AppButton aria-label="Zoom" $open><ZoomApp /></AppButton>
          <Spacer />
          <Grip $after={20} />
          <Lang>ES</Lang>
          <Weather><Moon /><span>16°C</span><span>Prac. despejado</span></Weather>
          <TrayIcon aria-label="Ocultos"><ChevronUp size={20} strokeWidth={1.5} /></TrayIcon>
          <TrayIcon aria-label="Volumen"><Volume2 size={20} strokeWidth={1.5} /></TrayIcon>
          <TrayIcon aria-label="Red"><WifiArcs /></TrayIcon>
          <TrayIcon aria-label="Micrófono"><Mic size={20} fill="#000" /></TrayIcon>
          <TrayIcon aria-label="Batería"><svg width="20" height="14" viewBox="0 0 20 14"><path d="M4 3h14v2h2v5h-2v3H4z" /><path d="M0 2h5v4H4v3H1V6H0zM1 0h1v2H1zM3 0h1v2H3z" stroke="#eee" strokeWidth=".5" /></svg></TrayIcon>
          <TrayIcon $w={40} aria-label="Teclado"><svg width="30" height="17" viewBox="0 0 30 17" fill="none" stroke="#000"><rect x=".5" y=".5" width="29" height="16" rx="1" /><path d="M3 4.500h24M3 8.500h24" strokeDasharray="2 1" /><path d="M3 12.500h3M8 12.500h14M24 12.500h3" /></svg></TrayIcon>
          <Clock>20:31<br />30-10-2024</Clock>
          <Notify aria-label="Notificaciones"><MessageSquare size={22} strokeWidth={1.3} /></Notify>
        </Taskbar>
      </Desktop>
    </>
  );
}
